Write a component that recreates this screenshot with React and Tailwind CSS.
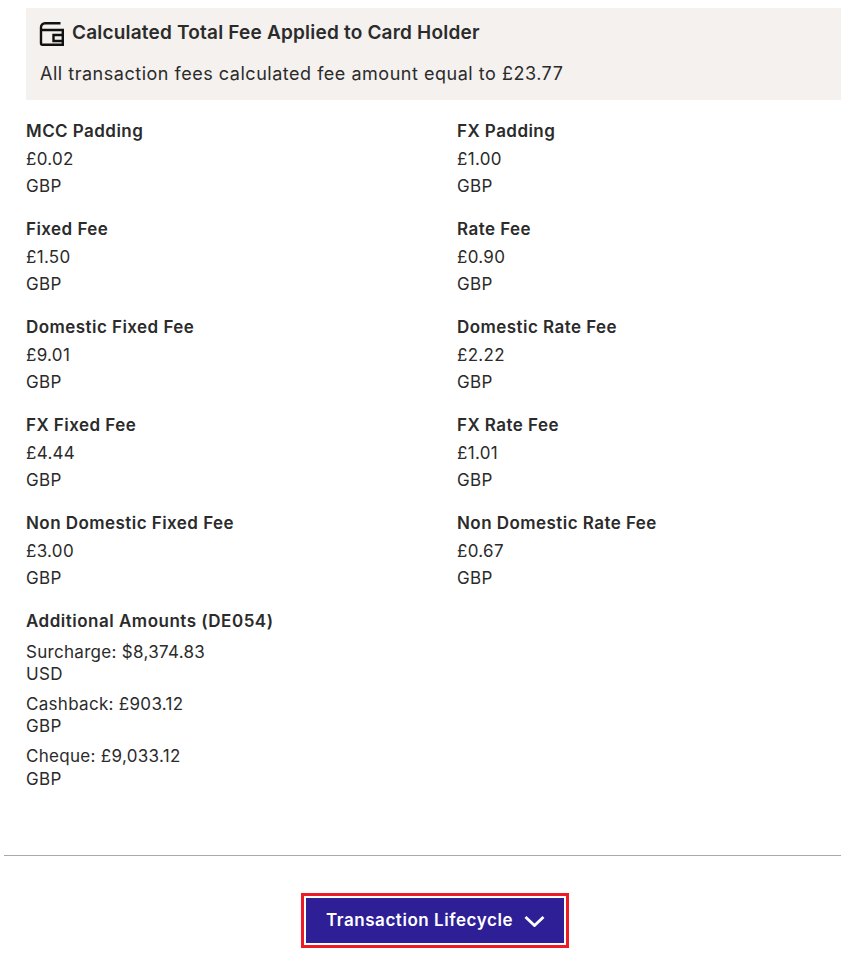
const fees = [
  ["MCC Padding", "£0.02", "FX Padding", "£1.00"],
  ["Fixed Fee", "£1.50", "Rate Fee", "£0.90"],
  ["Domestic Fixed Fee", "£9.01", "Domestic Rate Fee", "£2.22"],
  ["FX Fixed Fee", "£4.44", "FX Rate Fee", "£1.01"],
  ["Non Domestic Fixed Fee", "£3.00", "Non Domestic Rate Fee", "£0.67"],
];

function Fee({ label, value }) {
  return (
    <div className="h-[98px] pt-[12px]">
      <div className="text-[17px] leading-[27px] font-semibold tracking-[0.45px] mb-px">{label}</div>
      <div className="text-[17px] leading-[27px] tracking-[0.3px]">{value}</div>
      <div className="text-[17px] leading-[27px] tracking-[0.3px]">GBP</div>
    </div>
  );
}

function Wallet() {
  return (
    <svg width="25" height="25" viewBox="0 0 25 25" fill="none" stroke="#111" strokeWidth="2.4">
      <path d="M21.500 2.200H6a4 4 0 0 0-4 4V22.300a1.500 1.500 0 0 0 1.500 1.500H23.800V9H2" />
      <path d="M23.800 14H14.500v6h9.300" />
    </svg>
  );
}

export default function App() {
  return (
    <div className="w-[841px] h-[958px] bg-white text-[#2b2b2b] font-['Inter','Liberation_Sans',sans-serif] overflow-hidden">
      <div className="ml-[26px] mt-[8px] h-[92px] bg-[#f4f1ee] pl-[13px] pt-[10px]">
        <div className="flex items-center gap-[8px] h-[30px]">
          <Wallet />
          <span className="text-[19px] font-semibold tracking-[0.2px]">Calculated Total Fee Applied to Card Holder</span>
        </div>
        <div className="text-[18px] mt-[12px] leading-[27px] pl-px tracking-[0.52px]">All transaction fees calculated fee amount equal to £23.77</div>
      </div>
      <div className="mt-[6px] ml-[26px] grid grid-cols-[431px_1fr]">
        {fees.map(([a, b, c, d]) => [
          <Fee key={a} label={a} value={b} />,
          <Fee key={c} label={c} value={d} />,
        ])}
      </div>
      <div className="ml-[26px] pt-[12px]">
        <div className="text-[17px] leading-[27px] font-semibold tracking-[0.5px]">Additional Amounts (DE054)</div>
        <div className="mt-[6px] text-[17px] leading-[22px] tracking-[0.3px]">
          <div>Surcharge: $8,374.83</div>
          <div>USD</div>
          <div className="mt-[8px]">Cashback: £903.12</div>
          <div>GBP</div>
          <div className="mt-[8px]">Cheque: £9,033.12</div>
          <div className="mt-px -mb-px">GBP</div>
        </div>
      </div>
      <div className="ml-[4px] mt-[66px] h-px bg-[#a9a9a9]" />
      <div className="flex justify-center mt-[37px] ml-[28px]">
        <button className="w-[268px] h-[55px] border-[3px] border-[#ed1c24] p-[2px]">
          <span className="h-full w-full flex items-center justify-center gap-[11px] pl-[2px] bg-[#2e1f96] text-white text-[17px] font-semibold tracking-[0.55px]">
            Transaction Lifecycle
            <svg width="21" height="12" viewBox="0 0 21 12" fill="none" stroke="#fff" strokeWidth="2.8"><path d="M1.500 2 10.500 10.500 19.500 2" /></svg>
          </span>
        </button>
      </div>
    </div>
  );
}
